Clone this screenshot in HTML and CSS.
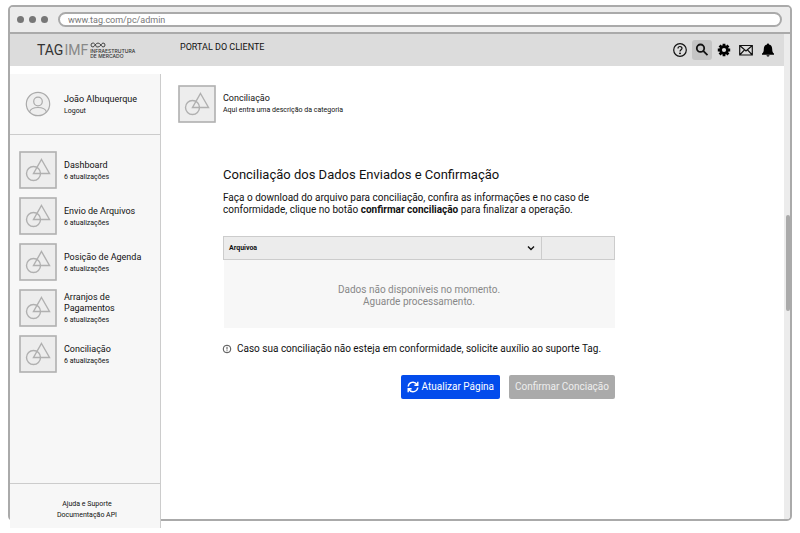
FILE: index.html
```html
<!DOCTYPE html>
<html lang="pt-BR">
<head>
<meta charset="utf-8">
<meta name="viewport" content="width=device-width, initial-scale=1">
<title>Portal do Cliente</title>
<link rel="stylesheet" href="styles.css">
</head>
<body>
<svg class="sprite" aria-hidden="true">
  <symbol id="shapes" viewBox="0 0 38 38">
    <rect x="1" y="1" width="36" height="36" stroke-width="1.600" fill="#ededed"/>
    <circle cx="14.500" cy="22.500" r="7"/>
    <path d="M22.500 8.500 30.500 22.500H14.500Z"/>
  </symbol>
</svg>
<div class="window">
  <div class="chrome">
    <span class="dot"></span><span class="dot"></span><span class="dot"></span>
    <input class="address" type="text" aria-label="Endereço" value="www.tag.com/pc/admin">
  </div>
  <div class="viewport">
    <div class="page">
      <header class="topbar">
        <a class="logo" href="#">
          <span class="logo-name">TAG<span class="logo-light">IMF</span></span>
          <span class="logo-side">
            <svg class="logo-mark" viewBox="0 0 16 6" aria-hidden="true"><path d="M5.500 3C4.500 1.500 3.800 1 3 1a2 2 0 0 0 0 4c1.500 0 2.500-4 5-4s3.500 4 5 4a2 2 0 0 0 0-4c-1.500 0-2.500 4-5 4S6.500 4.500 5.500 3"/></svg>
            <span class="logo-tag">INFRAESTRUTURA<br>DE MERCADO</span>
          </span>
        </a>
        <span class="portal">PORTAL DO CLIENTE</span>
        <nav class="tools" aria-label="Ferramentas">
          <button class="tool" aria-label="Ajuda"><svg viewBox="0 0 16 16"><circle cx="8" cy="8" r="6.300" class="line"/><path class="line" d="M6 6.500c0-2.600 4-2.600 4-.2 0 1.500-2 1.400-2 3.200"/><circle cx="8" cy="11.300" r=".9"/></svg></button>
          <button class="tool active" aria-label="Buscar"><svg viewBox="0 0 16 16"><circle cx="6.500" cy="6.200" r="3.700" class="bold"/><path class="bold" d="m9.200 8.900 4.300 4.300"/></svg></button>
          <button class="tool" aria-label="Configurações"><svg viewBox="0 0 16 16"><path class="cog-teeth" d="M8 1.800v12.400M1.800 8h12.400M3.600 3.600l8.800 8.800M12.400 3.600l-8.800 8.800"/><circle cx="8" cy="8" r="4.700"/><circle class="cog-hole" cx="8" cy="8" r="2.100"/></svg></button>
          <button class="tool" aria-label="Mensagens"><svg viewBox="0 0 16 16"><path class="line" d="M1.700 3.500h12.600v9.500H1.700zM1.700 3.500 8 9l6.300-5.500M1.700 13l4.800-5.200M14.300 13 9.500 7.800"/></svg></button>
          <button class="tool" aria-label="Notificações"><svg viewBox="0 0 16 16"><path d="M8 1.500c.7 0 1 .4 1 1 2.200.5 3.200 2.200 3.200 4.500 0 3 .6 3.700 1.800 4.500v1.300H2v-1.300c1.200-.8 1.800-1.500 1.800-4.500 0-2.300 1-4 3.200-4.500 0-.6.300-1 1-1ZM6.500 13.300h3c0 1.700-3 1.700-3 0Z"/></svg></button>
        </nav>
      </header>
      <div class="body">
        <aside class="sidebar">
          <div class="profile">
            <svg class="avatar" viewBox="0 0 26 26" aria-hidden="true"><circle cx="13" cy="13" r="11.700"/><circle cx="13" cy="10.500" r="4.300"/><path d="M4.500 21c2-6 15-6 17 0"/></svg>
            <div class="item-text"><p class="label">João Albuquerque</p><a class="small" href="#">Logout</a></div>
          </div>
          <nav class="menu" aria-label="Menu">
            <a class="item" href="#"><svg class="thumb"><use href="#shapes"/></svg><span class="item-text"><span class="label">Dashboard</span><span class="small">6 atualizações</span></span></a>
            <a class="item" href="#"><svg class="thumb"><use href="#shapes"/></svg><span class="item-text"><span class="label">Envio de Arquivos</span><span class="small">6 atualizações</span></span></a>
            <a class="item" href="#"><svg class="thumb"><use href="#shapes"/></svg><span class="item-text"><span class="label">Posição de Agenda</span><span class="small">6 atualizações</span></span></a>
            <a class="item" href="#"><svg class="thumb"><use href="#shapes"/></svg><span class="item-text"><span class="label">Arranjos de Pagamentos</span><span class="small">6 atualizações</span></span></a>
            <a class="item" href="#"><svg class="thumb"><use href="#shapes"/></svg><span class="item-text"><span class="label">Conciliação</span><span class="small">6 atualizações</span></span></a>
          </nav>
          <div class="support"><a href="#">Ajuda e Suporte</a><a href="#">Documentação API</a></div>
        </aside>
        <main class="content">
          <div class="category">
            <svg class="thumb"><use href="#shapes"/></svg>
            <div><p class="label">Conciliação</p><p class="small">Aqui entra uma descrição da categoria</p></div>
          </div>
          <section class="panel">
            <h1>Conciliação dos Dados Enviados e Confirmação</h1>
            <p class="intro">Faça o download do arquivo para conciliação, confira as informações e no caso de conformidade, clique no botão <b>confirmar conciliação</b> para finalizar a operação.</p>
            <table class="files">
              <thead><tr>
                <th scope="col"><button class="sort">Arquivoa<svg viewBox="0 0 8 8" aria-hidden="true"><path d="m1 2.500 3 3 3-3"/></svg></button></th>
                <td class="actions-col"></td>
              </tr></thead>
              <tbody><tr><td class="empty" colspan="2">Dados não disponíveis no momento.<br>Aguarde processamento.</td></tr></tbody>
            </table>
            <p class="notice"><svg viewBox="0 0 10 10" aria-hidden="true"><circle cx="5" cy="5" r="3.800"/><path d="M5 2.800v2.700M5 6.300v1"/></svg>Caso sua conciliação não esteja em conformidade, solicite auxílio ao suporte Tag.</p>
            <div class="buttons">
              <button class="btn primary"><svg viewBox="0 0 12 12" aria-hidden="true"><path d="M1.200 5.500C1.700 1 7.500-.2 10 3.500M10.800 6.500C10.300 11 4.500 12.200 2 8.500M10.800.8v3.400H7.400M1.200 11.200V7.800h3.400"/></svg>Atualizar Página</button>
              <button class="btn muted">Confirmar Conciação</button>
            </div>
          </section>
        </main>
      </div>
    </div>
    <div class="track"><div class="handle"></div></div>
  </div>
</div>
</body>
</html>
```
FILE: styles.css
```css
* { box-sizing: border-box; }
body {
  margin: 0;
  padding: 5px 8px 12px;
  background: #fff;
  color: #111;
  font: 10px/12px Roboto, sans-serif;
}
p, h1 { margin: 0; }
a { color: inherit; text-decoration: none; }
button { margin: 0; padding: 0; border: 0; background: none; font: inherit; color: inherit; }
.sprite { display: none; }

.window {
  display: flex;
  flex-direction: column;
  min-height: calc(100vh - 17px);
  border: 2px solid #aaa;
  border-radius: 5px;
}
.chrome {
  display: flex;
  align-items: center;
  gap: 5px;
  height: 27px;
  padding: 0 8px 0 7px;
  background: #ececec;
  border-bottom: 2px solid #aaa;
  border-radius: 3px 3px 0 0;
}
.dot { width: 7px; height: 7px; border-radius: 50%; background: #777; }
.address {
  flex: 1;
  min-width: 0;
  height: 15px;
  margin-left: 5px;
  padding: 0 8px;
  border: 2px solid #aaa;
  border-radius: 8px;
  background: #fff;
  color: #777;
  font: 9px/11px Roboto, sans-serif;
}
.viewport { display: flex; flex: 1; }
.page { display: flex; flex: 1; flex-direction: column; min-width: 0; }
.track { width: 6px; padding-top: 181px; background: #ececec; border-radius: 0 0 3px 0; }
.handle { width: 4px; height: 96px; margin-left: 2px; border-radius: 2px; background: #aaa; }

.topbar { display: flex; align-items: center; height: 32px; padding: 0 6px 0 27px; background: #dcdcdc; }
.logo { display: flex; align-items: center; gap: 2px; width: 143px; color: #333; }
.logo-name { display: flex; gap: 1px; font: 14px/20px Roboto, sans-serif; }
.logo-light { color: #888; }
.logo-side { display: flex; flex-direction: column; gap: 1px; }
.logo-mark { width: 16px; height: 6px; fill: none; stroke: #333; stroke-width: .9; }
.logo-tag { font: 500 5px/5px Inter, sans-serif; white-space: nowrap; }
.portal { flex: 1; align-self: flex-start; font-size: 9px; line-height: 26px; }
.tools { display: flex; gap: 2px; }
.tool { display: flex; align-items: center; justify-content: center; width: 20px; height: 20px; border-radius: 3px; }
.tool.active { background: #c4c4c4; }
.tool svg { width: 16px; height: 16px; }
.line { fill: none; stroke: #111; stroke-width: 1.2; }
.bold { fill: none; stroke: #111; stroke-width: 1.8; }
.cog-teeth { stroke: #000; stroke-width: 2.8; }
.cog-hole { fill: #dcdcdc; }

.body { display: flex; flex: 1; }
.sidebar {
  position: relative;
  display: flex;
  flex-direction: column;
  width: 151px;
  margin: 8px 0 -9px;
  background: #f7f7f7;
  border-right: 1px solid #ccc;
}
.profile {
  display: flex;
  align-items: center;
  gap: 13px;
  height: 61px;
  padding-left: 15px;
  border-bottom: 1px solid #ccc;
}
.avatar { width: 26px; height: 26px; fill: #eee; stroke: #aaa; stroke-width: 1.2; }
.label { display: block; font-size: 9px; line-height: 11px; }
.small { display: block; font-size: 7px; line-height: 12px; }
.menu { display: flex; flex: 1; flex-direction: column; gap: 8px; padding: 16px 10px 0 9px; }
.item { display: flex; align-items: center; gap: 7px; }
.item-text { padding-top: 2px; }
.thumb {
  flex: none;
  width: 38px;
  height: 38px;
  fill: none;
  stroke: #b0b0b0;
  stroke-width: 1.4;
}
.support {
  display: flex;
  flex-direction: column;
  height: 45px;
  padding: 15px 0 0 4px;
  border-top: 1px solid #ccc;
  font-size: 7px;
  line-height: 11px;
  text-align: center;
}

.content { flex: 1; min-width: 0; padding: 19px 17px 0; }
.category { display: flex; align-items: center; gap: 7px; }
.panel { max-width: 392px; margin: 44px 0 0 45px; }
h1 { font-size: 13px; font-weight: 400; line-height: 16px; }
.intro { margin-top: 9px; }
.files { width: 100%; margin-top: 20px; border-collapse: collapse; }
.files thead th, .files thead td { height: 23px; padding: 0; border: 1px solid #ccc; background: #ececec; }
.files .actions-col { width: 73px; }
.sort { display: flex; align-items: center; justify-content: space-between; width: 100%; padding: 0 6px 0 5px; font-size: 7px; font-weight: 700; }
.sort svg { width: 8px; height: 8px; fill: none; stroke: #111; stroke-width: 1.4; }
.files .empty { height: 68px; padding: 4px 0 0; background: #f7f7f7; color: #888; text-align: center; }
.notice { display: flex; align-items: center; gap: 5px; margin-top: 15px; }
.notice svg { width: 10px; height: 10px; margin-left: -1px; fill: none; stroke: #222; stroke-width: .8; }
.buttons { display: flex; justify-content: flex-end; gap: 9px; margin-top: 20px; }
.btn { display: flex; align-items: center; gap: 3px; height: 24px; padding: 0 6px; border-radius: 2px; color: #fff; }
.btn svg { width: 12px; height: 12px; fill: none; stroke: #fff; stroke-width: 1.4; }
.primary { background: #034cec; }
.muted { background: #aaa; color: #eee; }
```
